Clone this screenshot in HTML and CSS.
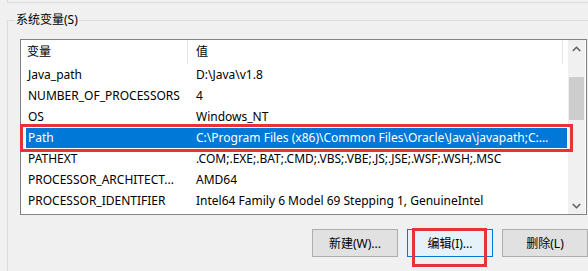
FILE: index.html
```html
<html>
	<head>
		<title>系统变量</title>
		<link rel="stylesheet" href="styles.css">
	</head>
	<body>
		<div class="prev"></div>
		<fieldset class="group">
			<legend>系统变量(S)</legend>
			<div class="list">
				<div class="rows">
					<div class="head"><span class="c1">变量</span><span class="c2">值</span></div>
					<div class="row"><span class="c1">Java_path</span><span class="c2">D:\Java\v1.8</span></div>
					<div class="row"><span class="c1">NUMBER_OF_PROCESSORS</span><span class="c2">4</span></div>
					<div class="row"><span class="c1">OS</span><span class="c2">Windows_NT</span></div>
					<div class="row sel"><span class="c1">Path</span><span class="c2">C:\Program Files (x86)\Common Files\Oracle\Java\javapath;C:...</span></div>
					<div class="row"><span class="c1">PATHEXT</span><span class="c2">.COM;.EXE;.BAT;.CMD;.VBS;.VBE;.JS;.JSE;.WSF;.WSH;.MSC</span></div>
					<div class="row"><span class="c1">PROCESSOR_ARCHITECT...</span><span class="c2">AMD64</span></div>
					<div class="row"><span class="c1">PROCESSOR_IDENTIFIER</span><span class="c2">Intel64 Family 6 Model 69 Stepping 1, GenuineIntel</span></div>
				</div>
				<div class="scroll">
					<div class="arrow">
						<svg width="9" height="6" viewBox="0 0 9 6"><polyline points="0.8,5 4.5,1.3 8.2,5" fill="none" stroke="#606060" stroke-width="1.6"/></svg>
					</div>
					<div class="track"><div class="thumb"></div></div>
					<div class="arrow">
						<svg width="9" height="6" viewBox="0 0 9 6"><polyline points="0.8,1 4.5,4.7 8.2,1" fill="none" stroke="#606060" stroke-width="1.6"/></svg>
					</div>
				</div>
				<div class="mark"></div>
			</div>
			<div class="buttons">
				<button class="btn">新建(W)...</button>
				<button class="btn def">编辑(I)...</button>
				<button class="btn">删除(L)</button>
			</div>
		</fieldset>
	</body>
</html>
```
FILE: styles.css
```css
*{
	box-sizing:border-box;
}
body{
	margin:0;
	background-color:#f0f0f0;
	font-family:"Segoe UI","Noto Sans","Noto Sans CJK SC",sans-serif;
	font-size:12px;
	color:#000;
	overflow:hidden;
}
.prev{
	height:3px;
	margin-left:7px;
	border-left:1px solid #dcdcdc;
	border-bottom:1px solid #dcdcdc;
}
.group{
	margin:9px 0 0 7px;
	padding:0 0 0 12px;
	width:581px;
	height:260px;
	border:1px solid #dcdcdc;
	border-right:none;
	min-width:0;
}
.group legend{
	margin-left:-5px;
	padding:0 1px;
	line-height:16px;
}
.list{
	position:relative;
	display:flex;
	margin-top:11px;
	width:567px;
	height:176px;
	border:1px solid #828282;
	background-color:#fff;
}
.rows{
	width:547px;
}
.head{
	display:flex;
	height:24px;
	line-height:24px;
}
.head .c1{
	width:167px;
	padding-left:6px;
	border-right:1px solid #e5e5e5;
}
.head .c2{
	width:375px;
	padding-left:8px;
	border-right:1px solid #e5e5e5;
}
.row{
	display:flex;
	margin:1px 0 0 5px;
	width:541px;
	height:20px;
	line-height:20px;
	white-space:nowrap;
}
.row .c1{
	width:161px;
	padding-left:2px;
	overflow:hidden;
}
.row .c2{
	flex:1;
	padding-left:9px;
	overflow:hidden;
	text-overflow:ellipsis;
}
.row.sel{
	background-color:#0078d7;
	color:#fff;
}
.scroll{
	display:flex;
	flex-direction:column;
	width:17px;
	background-color:#f0f0f0;
}
.arrow{
	height:17px;
	display:flex;
	align-items:center;
	justify-content:center;
}
.track{
	flex:1;
	padding:20px 1px 0 1px;
}
.thumb{
	height:43px;
	background-color:#cdcdcd;
}
.mark{
	position:absolute;
	left:-1px;
	top:84px;
	width:553px;
	height:28px;
	border:3px solid #e5323b;
}
.buttons{
	display:flex;
	gap:9px;
	margin:14px 0 0 292px;
}
.btn{
	width:86px;
	height:28px;
	padding:0;
	font-family:inherit;
	font-size:12px;
	color:#000;
	background-color:#e1e1e1;
	border:1px solid #adadad;
}
.btn.def{
	position:relative;
	background-color:#e5f1fb;
	border-color:#0078d7;
}
.btn.def::after{
	content:"";
	position:absolute;
	left:4px;
	top:-2px;
	width:69px;
	height:33px;
	border:3px solid #e5323b;
}
```
